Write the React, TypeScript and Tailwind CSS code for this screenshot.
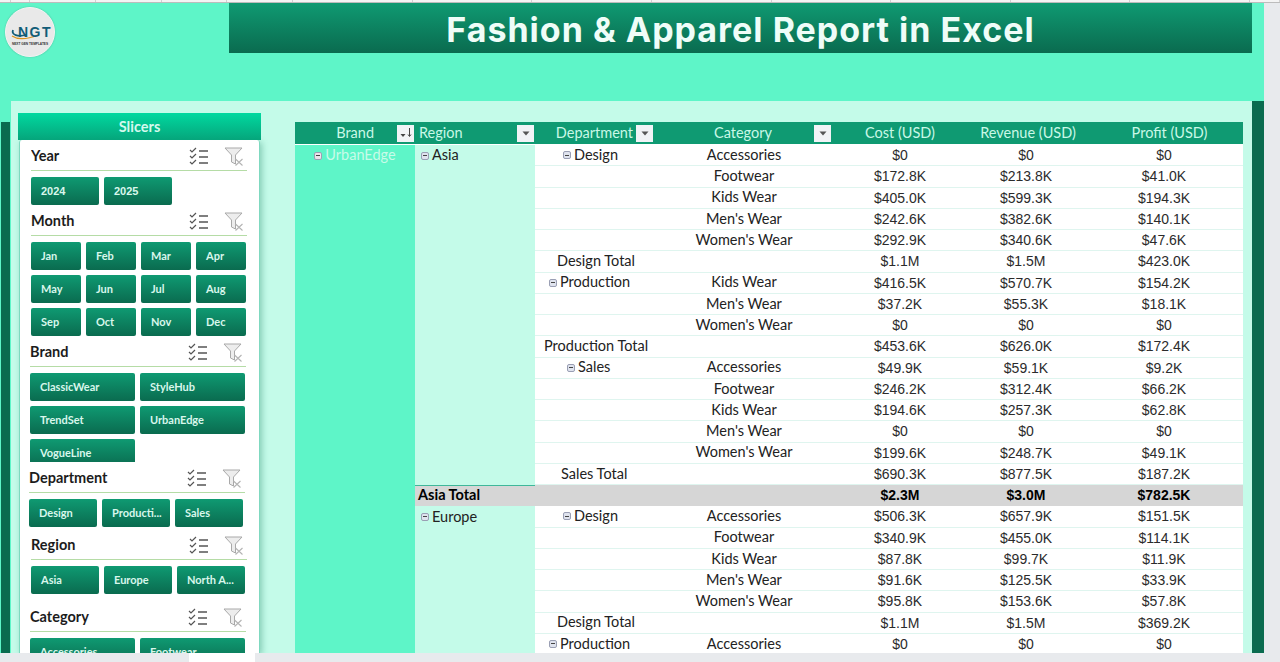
const LABEL_FONT = "font-['Lato','Noto_Sans',sans-serif]";

const TICKS = [11, 19, 66, 66, 66, 66, 120, 120, 120, 120, 120, 120, 120, 120, 30];

type Row = {
  region?: string;
  dept?: string;
  deptTotal?: string;
  cat?: string;
  cost: string;
  rev: string;
  profit: string;
  grand?: string;
};

const ROWS: Row[] = [
  { region: 'Asia', dept: 'Design', cat: 'Accessories', cost: '$0', rev: '$0', profit: '$0' },
  { cat: 'Footwear', cost: '$172.8K', rev: '$213.8K', profit: '$41.0K' },
  { cat: 'Kids Wear', cost: '$405.0K', rev: '$599.3K', profit: '$194.3K' },
  { cat: "Men's Wear", cost: '$242.6K', rev: '$382.6K', profit: '$140.1K' },
  { cat: "Women's Wear", cost: '$292.9K', rev: '$340.6K', profit: '$47.6K' },
  { deptTotal: 'Design Total', cost: '$1.1M', rev: '$1.5M', profit: '$423.0K' },
  { dept: 'Production', cat: 'Kids Wear', cost: '$416.5K', rev: '$570.7K', profit: '$154.2K' },
  { cat: "Men's Wear", cost: '$37.2K', rev: '$55.3K', profit: '$18.1K' },
  { cat: "Women's Wear", cost: '$0', rev: '$0', profit: '$0' },
  { deptTotal: 'Production Total', cost: '$453.6K', rev: '$626.0K', profit: '$172.4K' },
  { dept: 'Sales', cat: 'Accessories', cost: '$49.9K', rev: '$59.1K', profit: '$9.2K' },
  { cat: 'Footwear', cost: '$246.2K', rev: '$312.4K', profit: '$66.2K' },
  { cat: 'Kids Wear', cost: '$194.6K', rev: '$257.3K', profit: '$62.8K' },
  { cat: "Men's Wear", cost: '$0', rev: '$0', profit: '$0' },
  { cat: "Women's Wear", cost: '$199.6K', rev: '$248.7K', profit: '$49.1K' },
  { deptTotal: 'Sales Total', cost: '$690.3K', rev: '$877.5K', profit: '$187.2K' },
  { grand: 'Asia Total', cost: '$2.3M', rev: '$3.0M', profit: '$782.5K' },
  { region: 'Europe', dept: 'Design', cat: 'Accessories', cost: '$506.3K', rev: '$657.9K', profit: '$151.5K' },
  { cat: 'Footwear', cost: '$340.9K', rev: '$455.0K', profit: '$114.1K' },
  { cat: 'Kids Wear', cost: '$87.8K', rev: '$99.7K', profit: '$11.9K' },
  { cat: "Men's Wear", cost: '$91.6K', rev: '$125.5K', profit: '$33.9K' },
  { cat: "Women's Wear", cost: '$95.8K', rev: '$153.6K', profit: '$57.8K' },
  { deptTotal: 'Design Total', cost: '$1.1M', rev: '$1.5M', profit: '$369.2K' },
  { dept: 'Production', cat: 'Accessories', cost: '$0', rev: '$0', profit: '$0' },
];

const DEPT_OFFSET: Record<string, string> = {
  Design: 'pl-[28px]',
  Production: 'pl-[14px]',
  Sales: 'pl-[32px]',
};

const TOTAL_OFFSET: Record<string, string> = {
  'Design Total': 'pl-[22px]',
  'Production Total': 'pl-[9px]',
  'Sales Total': 'pl-[26px]',
};

function ChecklistIcon() {
  return (
    <svg width="20" height="18" viewBox="0 0 20 18" fill="none" stroke="#555" strokeWidth="1.2">
      <path d="M1 3l2 2 4-4M1 9l2 2 4-4M1 15l2 2 4-4" />
      <path d="M10 4h9M10 10h9M10 16h9" strokeWidth="1.4" />
    </svg>
  );
}

function ClearFilterIcon() {
  return (
    <svg width="20" height="19" viewBox="0 0 20 19" fill="none">
      <path d="M1 1h17l-6.5 7v9l-4-2V8z" fill="#ededed" stroke="#a9a9a9" strokeWidth="1" />
      <path d="M11.5 12l7 6.500M18.500 12l-7 6.500" stroke="#b3b3b3" strokeWidth="1.1" />
    </svg>
  );
}

function Collapse({ onMint }: { onMint?: boolean }) {
  return (
    <span
      className={`mr-[3px] flex h-[8px] w-[8px] shrink-0 items-center justify-center rounded-[2px] border border-[#9a9fb4] ${
        onMint ? 'bg-[#ece3ea]' : 'bg-[#dfe3ee]'
      }`}
    >
      <span className="h-px w-[4px] bg-[#444]" />
    </span>
  );
}

function FilterBtn({ sorted, className = '' }: { sorted?: boolean; className?: string }) {
  return (
    <span className={`flex h-[17px] w-[17px] items-center justify-center bg-[#f1f3f6] ${className}`}>
      {sorted ? (
        <svg width="14" height="12" viewBox="0 0 14 12">
          <path d="M1.500 7h5l-2.500 3z" fill="#444" />
          <path d="M10.500 1v8M9 7.500l1.500 2 1.500-2" stroke="#444" fill="none" strokeWidth="1" />
        </svg>
      ) : (
        <svg width="8" height="5" viewBox="0 0 8 5">
          <path d="M0.500 0.500h7l-3.500 4z" fill="#555" />
        </svg>
      )}
    </span>
  );
}

function SlicerBtn({ label, w, num }: { label: string; w: string; num?: boolean }) {
  return (
    <div
      className={`${w} flex h-[28px] shrink-0 items-center rounded-[2px] bg-gradient-to-b from-[#0f9a72] to-[#0a6b4f] pl-[10px] font-bold text-[#d9f7ec] ${
        num ? "font-['Liberation_Sans',sans-serif] text-[11px]" : 'text-[11px]'
      }`}
    >
      {label}
    </div>
  );
}

function SlicerSection({
  title,
  labels,
  btnW,
  wrap,
  num,
  className,
}: {
  title: string;
  labels: string[];
  btnW: string;
  wrap: string;
  num?: boolean;
  className: string;
}) {
  return (
    <div className={`overflow-hidden ${className}`}>
      <div className="flex h-[25px] w-[216px] items-center border-b border-[#b5dca6] pb-[4px] pr-[3px]">
        <span className="flex-1 text-[14.500px] font-bold leading-none text-[#1c1c1c]">{title}</span>
        <ChecklistIcon />
        <span className="ml-[15px]">
          <ClearFilterIcon />
        </span>
      </div>
      <div className={`mt-[6px] flex flex-wrap ${wrap}`}>
        {labels.map((l) => (
          <SlicerBtn key={l} label={l} w={btnW} num={num} />
        ))}
      </div>
    </div>
  );
}

function SlicerPanel() {
  return (
    <div className="relative ml-[7px] mt-[12px] h-[540px] w-[243px] shrink-0">
      <div className="relative z-10 flex h-[27px] items-center justify-center bg-gradient-to-b from-[#00d9a0] to-[#05a57b] text-[14.500px] font-bold text-[#d4faee]">
        Slicers
      </div>
      <div className="ml-[1px] h-[513px] w-[241px] overflow-hidden rounded-t-[3px] border-r border-l border-[#7fd9c0] bg-white shadow-[2px_2px_6px_rgba(20,120,90,0.35)]">
        <SlicerSection
          title="Year"
          labels={['2024', '2025']}
          btnW="w-[68px]"
          wrap="gap-x-[5px]"
          num
          className="ml-[11px] mt-[6px] h-[65px]"
        />
        <SlicerSection
          title="Month"
          labels={['Jan', 'Feb', 'Mar', 'Apr', 'May', 'Jun', 'Jul', 'Aug', 'Sep', 'Oct', 'Nov', 'Dec']}
          btnW="w-[50px]"
          wrap="gap-x-[5px] gap-y-[5px]"
          className="ml-[11px] h-[131px]"
        />
        <SlicerSection
          title="Brand"
          labels={['ClassicWear', 'StyleHub', 'TrendSet', 'UrbanEdge', 'VogueLine']}
          btnW="w-[105px]"
          wrap="gap-x-[5px] gap-y-[5px]"
          className="mb-[6px] ml-[10px] h-[120px]"
        />
        <SlicerSection
          title="Department"
          labels={['Design', 'Producti...', 'Sales']}
          btnW="w-[68px]"
          wrap="gap-x-[5px]"
          className="ml-[9px] h-[67px]"
        />
        <SlicerSection
          title="Region"
          labels={['Asia', 'Europe', 'North A...']}
          btnW="w-[68px]"
          wrap="gap-x-[5px]"
          className="ml-[11px] h-[72px]"
        />
        <SlicerSection
          title="Category"
          labels={['Accessories', 'Footwear']}
          btnW="w-[105px]"
          wrap="gap-x-[5px]"
          className="ml-[10px] h-[46px]"
        />
      </div>
    </div>
  );
}

const GRID = 'grid grid-cols-[120px_120px_120px_178px_134px_118px_158px]';

function PivotTable() {
  return (
    <div className={`ml-[34px] mt-[21px] w-[948px] ${LABEL_FONT}`}>
      <div className={`${GRID} h-[23px] items-center border-b border-white bg-[#0f9a72] text-[14.500px] text-[#c9f8e7]`}>
        <div className="flex items-center justify-end pr-[1px]">
          <span className="mr-[23px]">Brand</span>
          <FilterBtn sorted />
        </div>
        <div className="flex items-center justify-between pl-[4px] pr-[1px]">
          <span>Region</span>
          <FilterBtn />
        </div>
        <div className="flex items-center justify-end pr-[2px]">
          <span className="mr-[3px]">Department</span>
          <FilterBtn />
        </div>
        <div className="flex items-center justify-end pr-[2px]">
          <span className="mr-[42px]">Category</span>
          <FilterBtn />
        </div>
        <div className="text-center">Cost (USD)</div>
        <div className="whitespace-nowrap pl-[4px] text-center">Revenue (USD)</div>
        <div className="pl-[11px] text-center">Profit (USD)</div>
      </div>
      {ROWS.map((r, i) => {
        const vals = [r.cost, r.rev, r.profit];
        return (
          <div key={i} className={`${GRID} h-[21.250px] text-[14.500px] leading-none text-[#222]`}>
            <div className="flex items-center justify-center bg-[#5ef5c8] text-[#c8fbe9]">
              {i === 0 && (
                <>
                  <Collapse onMint />
                  UrbanEdge
                </>
              )}
            </div>
            {r.grand ? (
              <div className="flex items-center border-t border-[#3fb79a] bg-[#d6d6d6] pb-[2px] pl-[3px] font-bold text-black">
                {r.grand}
              </div>
            ) : (
              <div className="flex items-center bg-[#c4fbe9] pl-[6px]">
                {r.region && (
                  <>
                    <Collapse />
                    {r.region}
                  </>
                )}
              </div>
            )}
            <div className={`col-span-5 ${r.grand ? 'bg-[#d6d6d6] pb-[1px]' : 'border-b border-[#dff5ef] bg-white'} grid grid-cols-[120px_178px_134px_118px_158px]`}>
              <div className={`flex items-center ${r.dept ? DEPT_OFFSET[r.dept] : r.deptTotal ? TOTAL_OFFSET[r.deptTotal] : ''}`}>
                {r.dept && (
                  <>
                    <Collapse />
                    {r.dept}
                  </>
                )}
                {r.deptTotal}
              </div>
              <div className="flex items-center justify-center">{r.cat}</div>
              {vals.map((v, j) => (
                <div
                  key={j}
                  className={`flex items-center justify-center font-['Liberation_Sans',sans-serif] text-[14px] ${
                    r.grand ? 'font-bold text-black' : 'text-[#2b2b2b]'
                  }`}
                >
                  {v}
                </div>
              ))}
            </div>
          </div>
        );
      })}
    </div>
  );
}

function Logo() {
  return (
    <div className="ml-[5px] mt-[4px] flex h-[50px] w-[50px] shrink-0 flex-col items-center rounded-full border border-[#f4f4f4] bg-[#e9e9e9] shadow-[0_0_2px_rgba(0,0,0,0.2)]">
      <div className="relative mt-[14px] h-[18px] w-[42px]">
        <svg className="absolute left-0 top-[3px]" width="42" height="16" viewBox="0 0 42 16" fill="none">
          <path d="M3 11C9 15 19 14 29 10" stroke="#d9941f" strokeWidth="1.200" />
          <path d="M4 5C2 10 9 12 17 10" stroke="#125d78" strokeWidth="1.800" />
        </svg>
        <span className="absolute left-[9px] top-[2px] font-['Liberation_Sans',sans-serif] text-[14px] font-bold leading-[16px] tracking-[1.500px] text-[#125d78]">
          NGT
        </span>
      </div>
      <span className="mt-[2px] whitespace-nowrap font-['Liberation_Sans',sans-serif] text-[3.200px] font-bold leading-[5px] text-[#333]">
        NEXT GEN TEMPLATES
      </span>
    </div>
  );
}

export default function App() {
  return (
    <div className={`relative flex h-[662px] w-[1280px] flex-col overflow-hidden bg-[#e8eaed] ${LABEL_FONT}`}>
      <div className="flex h-[3px] w-full shrink-0 border-b border-[#bcbcbc] bg-[#f4f4f4]">
        {TICKS.map((w, i) => (
          <div key={i} style={{ width: w }} className="border-r border-[#d0d0d0]" />
        ))}
      </div>

      <div className="w-[1264px] flex-1 overflow-hidden">
        <div className="flex h-[98px] bg-[#5ef5c8]">
          <Logo />
          <div className="ml-[174px] flex h-[50px] w-[1023px] items-center justify-center bg-gradient-to-b from-[#0f9a72] to-[#0a6b4f] pt-[3px] font-['Inter',sans-serif] text-[34px] font-bold tracking-[1px] text-[#effdf8]">
            Fashion &amp; Apparel Report in Excel
          </div>
        </div>

        <div className="flex h-[552px]">
          <div className="flex w-[11px] shrink-0 flex-col bg-[#5ef5c8]">
            <div className="mt-[21px] ml-[1px] h-[531px] w-[9px] bg-[#0a6b4f]" />
          </div>
          <div className="flex w-[1241px] items-start bg-[#c4fbe9]">
            <SlicerPanel />
            <PivotTable />
          </div>
          <div className="w-[12px] shrink-0 bg-[#0a6b4f]" />
        </div>
      </div>

      <div className="absolute bottom-0 left-0 flex h-[9px] w-full bg-[#e8eaed]">
        <div className="ml-[189px] h-full w-[66px] bg-white" />
      </div>
    </div>
  );
}
